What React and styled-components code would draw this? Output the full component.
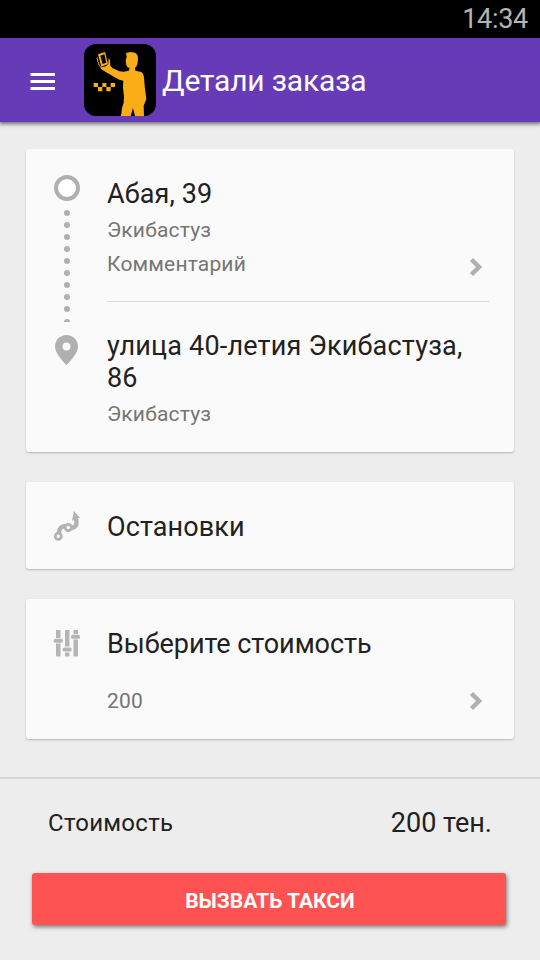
import React from 'react';
import styled, { createGlobalStyle } from 'styled-components';

const GlobalStyle = createGlobalStyle`
  * {
    box-sizing: border-box;
  }
  body {
    margin: 0;
    background: #ededed;
    font-family: Roboto, "Noto Sans", sans-serif;
  }
  svg {
    display: block;
    flex: none;
  }
`

const Screen = styled.div`
  width: 540px;
  height: 960px;
  display: flex;
  flex-direction: column;
  overflow: hidden;
  background: #ededed;
`

const StatusBar = styled.div`
  height: 38px;
  padding-right: 12px;
  background: #000;
  color: #b4b4b4;
  font-size: 27px;
  letter-spacing: -0.3px;
  line-height: 38px;
  text-align: right;
`

const Toolbar = styled.header`
  height: 84px;
  padding: 2px 0 0 30px;
  display: flex;
  align-items: center;
  background: #673ab7;
  box-shadow: 0 1px 4px 1px rgba(0, 0, 0, 0.55);
`

const Logo = styled.svg`
  margin: -2px 6px 0 29px;
  border-radius: 12px;
  background: #000;
`

const Title = styled.h1`
  margin: 0;
  color: #fff;
  font-size: 30px;
  font-weight: 400;
  letter-spacing: -0.17px;
  line-height: 36px;
`

const Content = styled.main`
  height: 655px;
  padding: 27px 26px 0;
  display: flex;
  flex-direction: column;
  gap: 30px;
`

const Card = styled.section`
  height: ${props => props.$height}px;
  padding: ${props => props.$top}px 25px 0 27px;
  display: flex;
  align-items: flex-start;
  background: #fafafa;
  border-radius: 3px;
  box-shadow: 0 1px 2px rgba(0, 0, 0, 0.24);
`

const IconColumn = styled.div`
  width: 54px;
  flex: none;
  padding-top: ${props => props.$top || 0}px;
`

const Details = styled.div`
  flex: 1;
  padding-top: ${props => props.$top || 0}px;
`

const Name = styled.div`
  color: #212121;
  font-size: 27px;
  letter-spacing: ${props => props.$spacing || 0}px;
  line-height: 32px;
`

const Note = styled.div`
  display: flex;
  justify-content: space-between;
  align-items: flex-start;
  height: 26px;
  margin-top: ${props => props.$gap}px;
  padding-right: 6px;
  color: #757575;
  font-size: 21px;
  letter-spacing: 0.18px;
  line-height: 26px;
`

const Arrow = styled.svg`
  margin-top: ${props => props.$top}px;
`

const Divider = styled.hr`
  height: 1px;
  margin: 24px 0 28px;
  border: 0;
  background: #dcdcdc;
`

const Footer = styled.footer`
  flex: 1;
  border-top: 2px solid #d6d6d6;
`

const Total = styled.div`
  height: 94px;
  padding: 29px 48px 0 48px;
  display: flex;
  justify-content: space-between;
  align-items: flex-start;
  color: #212121;
  font-size: 24px;
  letter-spacing: 0.27px;
  line-height: 31px;
`

const Price = styled.span`
  font-size: 27px;
  letter-spacing: 0;
`

const OrderButton = styled.button`
  display: block;
  width: 474px;
  height: 52px;
  margin-left: 32px;
  padding: 3px 0 0 2px;
  border: 0;
  border-radius: 3px;
  background: #ff5252;
  box-shadow: 1px 2px 4px rgba(0, 0, 0, 0.5);
  color: #fff;
  font-family: inherit;
  font-size: 21px;
  font-weight: 700;
  text-align: center;
`

const MenuIcon = () => (
  <svg width="25" height="17" viewBox="0 0 25 17" fill="#fff">
    <path d="M0.500 0h24.500v3H0.500zM0.500 7h24.500v3H0.500zM0.500 14h24.500v3H0.500z" />
  </svg>
)

const TaxiLogo = () => (
  <Logo width="72" height="72" viewBox="12 12 216 216" fill="#fbad18">
    <path d="M138 39L151 36L165 38Q174 43 174 54L173 68Q171 80 165 84L166 92L184 96Q191 100 192 112L194 137L196 154L199 178L194 190L191 197L192 228H165L159 204L152 228H123L126 204L131 188L132 171L129 143L130 122L118 119L99 109L81 98L64 88L59 79L65 82L78 79L85 71L86 55L90 60L91 77L97 84L118 94L132 95L146 92L149 84Q141 84 139 76L137 62L140 50Z" />
    <path d="M54 43L75 36L84 72L64 80Z" />
    <path d="M61 47L73 43L79 68L68 72Z" fill="#000" />
    <path d="M52 52L51 57L54 60L52 64L56 67L55 71L61 80" fill="none" stroke="#fbad18" strokeWidth="3" />
    <path d="M41 129h13v12h-13zM67 129h12v12h-12zM92 129h13v12h-13zM54 141h13v13h-13zM79 141h13v13h-13z" />
  </Logo>
)

const RouteRail = () => (
  <svg width="28" height="192" viewBox="0 0 28 192" fill="#b0b0b0">
    <circle cx="14" cy="14" r="11" fill="#fff" stroke="#b0b0b0" strokeWidth="4" />
    {[39, 51, 63, 75, 87, 99, 111, 123, 135].map(y => (
      <circle key={y} cx="14" cy={y} r="3" />
    ))}
    <path d="M11 148a3 3 0 0 1 6 0z" />
    <path
      fillRule="evenodd"
      d="M13.500 161C7 161 2 166 2 172.500C2 180.500 13.500 191 13.500 191S25 180.500 25 172.500C25 166 20 161 13.500 161zM13.500 168.500a4 4 0 1 1 0 8a4 4 0 0 1 0-8z"
    />
  </svg>
)

const StopsIcon = () => (
  <svg width="28" height="32" viewBox="0 0 28 32" fill="none" stroke="#b3b3b3">
    <path d="M6 23C6 17 9.500 16 14 16M17 18C23 18 25 14 22.500 8" strokeWidth="4.400" />
    <path d="M20.800 1L27.200 8L23 8.500L19 11Z" fill="#b3b3b3" stroke="none" />
    <circle cx="5.300" cy="26.300" r="3.100" fill="#fafafa" strokeWidth="2.700" />
    <circle cx="15.300" cy="17.500" r="3.100" fill="#fafafa" strokeWidth="2.700" />
  </svg>
)

const TuneIcon = () => (
  <svg width="27" height="27" viewBox="0 0 27 27" fill="#b5b5b5">
    <path d="M3 0h4.500v8H3zM3 13.500h4.500v13H3zM12 0h4.500v16.500H12zM12 22.500h4.500v4H12zM20.500 0h4.500v4h-4.500zM20.500 9.500h4.500v17h-4.500z" />
    <rect x="0.800" y="8.800" width="9" height="4" rx="1.500" />
    <rect x="9.600" y="17.500" width="9" height="4" rx="1.500" />
    <rect x="18" y="4.700" width="9" height="4" rx="1.500" />
  </svg>
)

const Chevron = ({ top }) => (
  <Arrow $top={top} width="14" height="20" viewBox="0 0 14 20">
    <path d="M2.500 2.500L10 10L2.500 17.500" fill="none" stroke="#b0b0b0" strokeWidth="4.500" />
  </Arrow>
)

const App = () => {
  return (
    <Screen>
      <GlobalStyle />
      <StatusBar>14:34</StatusBar>
      <Toolbar>
        <MenuIcon />
        <TaxiLogo />
        <Title>Детали заказа</Title>
      </Toolbar>

      <Content>
        <Card $height={303} $top={25}>
          <IconColumn>
            <RouteRail />
          </IconColumn>
          <Details $top={4}>
            <Name $spacing={0.12}>Абая, 39</Name>
            <Note $gap={7}>Экибастуз</Note>
            <Note $gap={8}>
              Комментарий
              <Chevron top={6} />
            </Note>
            <Divider />
            <Name $spacing={0.2}>улица 40-летия Экибастуза, 86</Name>
            <Note $gap={7}>Экибастуз</Note>
          </Details>
        </Card>

        <Card $height={87} $top={28}>
          <IconColumn>
            <StopsIcon />
          </IconColumn>
          <Details $top={1}>
            <Name $spacing={0.1}>Остановки</Name>
          </Details>
        </Card>

        <Card $height={140} $top={29}>
          <IconColumn $top={2}>
            <TuneIcon />
          </IconColumn>
          <Details>
            <Name $spacing={-0.05}>Выберите стоимость</Name>
            <Note $gap={28}>
              200
              <Chevron top={3} />
            </Note>
          </Details>
        </Card>
      </Content>

      <Footer>
        <Total>
          <span>Стоимость</span>
          <Price>200 тен.</Price>
        </Total>
        <OrderButton>ВЫЗВАТЬ ТАКСИ</OrderButton>
      </Footer>
    </Screen>
  )
}

export default App
